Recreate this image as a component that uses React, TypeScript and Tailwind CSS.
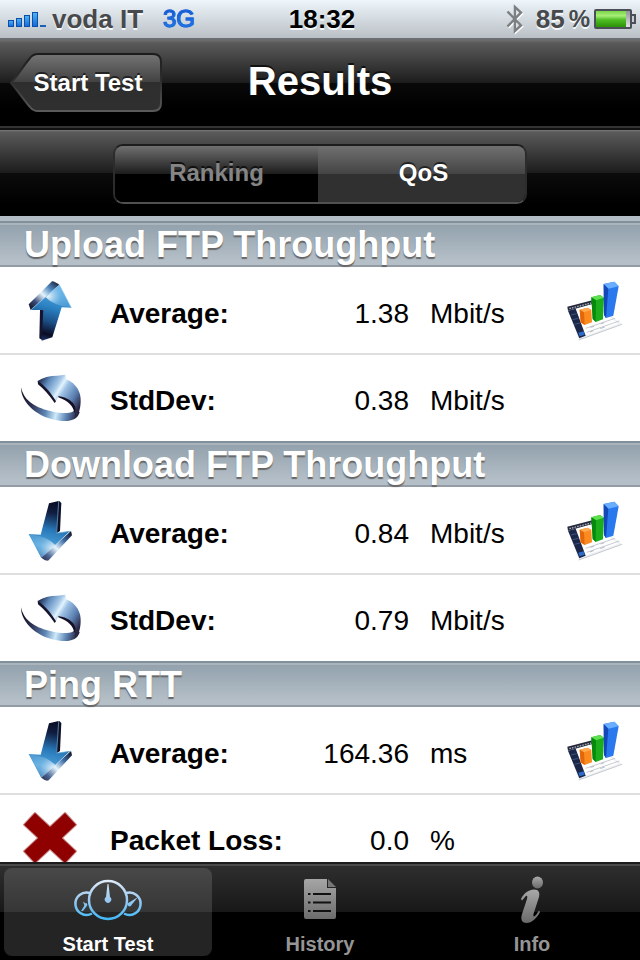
import type { ReactNode } from "react";

function SignalIcon() {
  return (
    <svg width="38" height="17" viewBox="0 0 38 17" aria-hidden="true">
      <defs>
        <linearGradient id="signal" x1="0" y1="0" x2="0" y2="1">
          <stop offset="0" stopColor="#52b4f4" />
          <stop offset="1" stopColor="#1268d8" />
        </linearGradient>
      </defs>
      <g fill="url(#signal)" stroke="#0b4fa8" strokeWidth="1">
        <rect x="0.5" y="9.5" width="5" height="6" />
        <rect x="8.5" y="7.5" width="5" height="8" />
        <rect x="16.5" y="4.5" width="5" height="11" />
        <rect x="24.5" y="1.5" width="5" height="14" />
      </g>
      <rect x="32" y="14" width="6" height="2" fill="#1a5fb5" />
    </svg>
  );
}

function BluetoothIcon() {
  return (
    <svg width="18" height="32" viewBox="0 0 18 32" fill="none" aria-hidden="true">
      <path d="M1.500 8.500 15 22.500 9 28V4l6 5.500L1.500 23.500" stroke="#fff" strokeWidth="2.500" transform="translate(1 1)" />
      <path d="M1.500 8.500 15 22.500 9 28V4l6 5.500L1.500 23.500" stroke="#7d8083" strokeWidth="2.500" />
    </svg>
  );
}

function BatteryIcon() {
  return (
    <svg width="42" height="21" viewBox="0 0 42 21" aria-hidden="true">
      <defs>
        <linearGradient id="charge" x1="0" y1="0" x2="0" y2="1">
          <stop offset="0" stopColor="#7ad548" />
          <stop offset="0.3" stopColor="#a8ee78" />
          <stop offset="0.55" stopColor="#4fbd24" />
          <stop offset="1" stopColor="#2c9208" />
        </linearGradient>
        <linearGradient id="cell" x1="0" y1="0" x2="0" y2="1">
          <stop offset="0" stopColor="#8d9094" />
          <stop offset="1" stopColor="#e4e6e8" />
        </linearGradient>
      </defs>
      <rect x="1" y="1" width="36" height="18" rx="1" fill="url(#cell)" stroke="#4b4f57" strokeWidth="2" />
      <rect x="2" y="2" width="30" height="16" fill="url(#charge)" />
      <path d="M38 6h3v8h-3" fill="#c9cdd1" stroke="#4b4f57" strokeWidth="2" />
    </svg>
  );
}

function UpArrowIcon() {
  return (
    <svg className="block" width="60" height="62" viewBox="60 45 180 186" aria-hidden="true">
      <defs>
        <linearGradient id="upFront" x1="0.55" y1="0" x2="0.35" y2="1">
          <stop offset="0" stopColor="#5fb0e6" />
          <stop offset="0.4" stopColor="#2b82c3" />
          <stop offset="0.65" stopColor="#1c4f86" />
          <stop offset="0.88" stopColor="#0a0c22" />
          <stop offset="1" stopColor="#1b3568" />
        </linearGradient>
        <linearGradient id="upSide" x1="0" y1="1" x2="1" y2="0">
          <stop offset="0" stopColor="#0b0a18" />
          <stop offset="0.25" stopColor="#3a4a78" />
          <stop offset="0.5" stopColor="#e6f4fd" />
          <stop offset="0.72" stopColor="#4f86be" />
          <stop offset="1" stopColor="#100c1e" />
        </linearGradient>
        <radialGradient id="upShine" cx="0.1" cy="0.5" r="0.9">
          <stop offset="0" stopColor="#fff" stopOpacity="0.9" />
          <stop offset="0.6" stopColor="#8ccaf2" stopOpacity="0.4" />
          <stop offset="1" stopColor="#8ccaf2" stopOpacity="0.2" />
        </radialGradient>
      </defs>
      <path d="M120 134 132 136 128 226 118 220Z" fill="#141430" />
      <path d="M178 59 214 128 185 127 157 217 125 227 130 135 92 135Z" fill="url(#upFront)" />
      <path d="M86 118 156 49Q160 46 178 59L92 135Z" fill="url(#upSide)" />
      <path d="M178 60 212 127Q160 122 136 96Z" fill="url(#upShine)" />
      <path d="M92 135 178 60 214 128" fill="none" stroke="#8cc8ee" strokeWidth="2" />
    </svg>
  );
}

function DownArrowIcon() {
  return (
    <svg className="block" width="60" height="62" viewBox="60 45 180 186" aria-hidden="true">
      <defs>
        <linearGradient id="downFront" x1="0.55" y1="0" x2="0.4" y2="1">
          <stop offset="0" stopColor="#0a0c22" />
          <stop offset="0.2" stopColor="#101d40" />
          <stop offset="0.5" stopColor="#2878b8" />
          <stop offset="0.8" stopColor="#4fa3dc" />
          <stop offset="1" stopColor="#2b6da8" />
        </linearGradient>
        <linearGradient id="downSide" x1="0" y1="1" x2="1" y2="0">
          <stop offset="0" stopColor="#2b2440" />
          <stop offset="0.2" stopColor="#4c6897" />
          <stop offset="0.45" stopColor="#e6f4fd" />
          <stop offset="0.7" stopColor="#3f6ea8" />
          <stop offset="1" stopColor="#0b0a18" />
        </linearGradient>
        <radialGradient id="downShine" cx="0.95" cy="0.6" r="0.9">
          <stop offset="0" stopColor="#fff" stopOpacity="0.9" />
          <stop offset="0.6" stopColor="#9fd0f0" stopOpacity="0.4" />
          <stop offset="1" stopColor="#9fd0f0" stopOpacity="0.2" />
        </radialGradient>
      </defs>
      <path d="M170 53 178 48 184 54 180 138 168 146Z" fill="#0f0f26" />
      <path d="M147 55 176 48 169 145 210 138 124 219 86 147 122 149Z" fill="url(#downFront)" />
      <path d="M213 138 216 151 146 226Q138 230 124 218Z" fill="url(#downSide)" />
      <path d="M88 148Q142 154 166 180L124 218Z" fill="url(#downShine)" />
      <path d="M176 49 170 144 213 139" fill="none" stroke="#6fb3e2" strokeWidth="2" />
    </svg>
  );
}

function DeviationIcon() {
  return (
    <svg className="block" width="62" height="50" viewBox="13 12 186 150" aria-hidden="true">
      <defs>
        <linearGradient id="swoosh" gradientUnits="userSpaceOnUse" x1="16" y1="90" x2="190" y2="130">
          <stop offset="0" stopColor="#141022" />
          <stop offset="0.2" stopColor="#2e3154" />
          <stop offset="0.45" stopColor="#5c86b4" />
          <stop offset="0.63" stopColor="#cdeafa" />
          <stop offset="0.8" stopColor="#6088b8" />
          <stop offset="1" stopColor="#241c38" />
        </linearGradient>
        <linearGradient id="swooshHead" gradientUnits="userSpaceOnUse" x1="66" y1="40" x2="190" y2="115">
          <stop offset="0" stopColor="#1f2a4c" />
          <stop offset="0.18" stopColor="#5f8abb" />
          <stop offset="0.38" stopColor="#a9cbe9" />
          <stop offset="0.46" stopColor="#e2f3fd" />
          <stop offset="0.56" stopColor="#9cc0e4" />
          <stop offset="0.8" stopColor="#587dae" />
          <stop offset="1" stopColor="#292744" />
        </linearGradient>
      </defs>
      <path d="M16 55C15 100 66 150 138 156C168 158 186 150 192 130L178 116C178 132 156 134 130 131C86 125 26 108 16 55Z" fill="url(#swoosh)" />
      <path d="M66 36Q90 20 125 20L149 17 151 30C184 44 197 72 195 98C194 120 190 138 176 146C186 118 164 92 128 82L120 98Z" fill="url(#swooshHead)" />
      <path d="M128 81C164 86 190 112 176 132C174 112 158 96 128 85Z" fill="#151025" />
      <path d="M66 35C88 50 108 74 121 97L117 102C102 80 84 60 67 46Z" fill="#17142b" />
    </svg>
  );
}

function CrossIcon() {
  return (
    <svg className="block" width="60" height="60" viewBox="-30 -30 60 60" aria-hidden="true">
      <g fill="#c98a8a">
        <rect x="-29" y="-9" width="58" height="18" rx="1" transform="rotate(43)" />
        <rect x="-29" y="-9" width="58" height="18" rx="1" transform="rotate(-43)" />
      </g>
      <g fill="#8f0000">
        <rect x="-28" y="-8" width="56" height="16" transform="rotate(43)" />
        <rect x="-28" y="-8" width="56" height="16" transform="rotate(-43)" />
      </g>
    </svg>
  );
}

function ChartIcon() {
  return (
    <svg className="block" width="60" height="62" viewBox="72 45 180 186" aria-hidden="true">
      <path d="M82 126 157 106 247 178 117 225Z" fill="#f0f2f5" />
      <path d="M88 136 155 118 235 176 130 214Z" fill="#fff" />
      <path d="M82 125 157 106 160 116 84 137Z" fill="#23283c" />
      <path d="M88 131 154 114" stroke="#a5a9b5" strokeWidth="4" strokeDasharray="5 3" />
      <path d="M84 137 107 131 137 212 118 220Z" fill="#1b2748" />
      <path d="M93 150 110 146M98 164 115 160M103 178 120 174" stroke="#506a9c" strokeWidth="2" />
      <path d="M115 203 131 199 134 209 119 214Z" fill="#2e6ccc" />
      <path d="M137 190 225 160M140 202 238 168M116 225 246 178" stroke="#aab0b8" strokeWidth="2" />
      <path d="M150 201 161 197M181 191 194 186M151 187 162 184M182 177 193 173" stroke="#b8bcc4" strokeWidth="3" />
      <path d="M119 134 142 128 154 134 156 172 134 180 122 172Z" fill="#fb8a20" />
      <path d="M119 134 142 128 154 134 132 142Z" fill="#ffab52" />
      <path d="M119 134 132 142 134 180 122 172Z" fill="#e56608" />
      <path d="M154 97 180 90 192 98 189 163 167 171 158 162Z" fill="#1cad1c" />
      <path d="M154 97 180 90 192 98 168 106Z" fill="#5ee04c" />
      <path d="M154 97 168 106 167 171 158 162Z" fill="#078a0c" />
      <path d="M191 57 223 50 236 64 220 152 198 159 192 150Z" fill="#2a78ee" />
      <path d="M191 57 223 50 236 64 205 71Z" fill="#69adff" />
      <path d="M191 57 205 71 198 159 192 150Z" fill="#1248b8" />
    </svg>
  );
}

function GaugesIcon() {
  return (
    <svg width="72" height="46" viewBox="0 0 72 46" fill="none" aria-hidden="true">
      <defs>
        <linearGradient id="gauge" gradientUnits="userSpaceOnUse" x1="0" y1="2" x2="0" y2="43">
          <stop offset="0" stopColor="#e3ecf8" />
          <stop offset="0.5" stopColor="#9cc9f2" />
          <stop offset="1" stopColor="#3fb9f8" />
        </linearGradient>
      </defs>
      <g stroke="url(#gauge)" strokeWidth="2.5">
        <path d="M18 16A11.200 11.200 0 1 0 20 36.500" />
        <path d="M54 16A11.200 11.200 0 1 1 52 36.500" />
        <circle cx="36" cy="23" r="19" />
      </g>
      <g fill="url(#gauge)">
        <path d="M35.500 7h1l1.500 13a3.200 3.200 0 1 1-4 0Z" />
        <path d="M14 26 9 34l2 0 3.500-4.500a2 2 0 0 0-.5-3.500Z" />
        <path d="M11 24.500 15 27.500 13 30Z" />
        <path d="M66 20 57 25.500a2 2 0 1 0 2.500 2.500Z" />
      </g>
    </svg>
  );
}

function HistoryIcon() {
  return (
    <svg width="34" height="46" viewBox="0 0 34 46" aria-hidden="true">
      <defs>
        <linearGradient id="paper" x1="0" y1="0" x2="0" y2="1">
          <stop offset="0" stopColor="#a6a6a6" />
          <stop offset="1" stopColor="#6c6c6c" />
        </linearGradient>
      </defs>
      <path d="M3 2H24V11H33V40Q33 42 31 42H3Q1 42 1 40V4Q1 2 3 2Z" fill="url(#paper)" />
      <path d="M25 2 33 10H25Z" fill="#777" />
      <path d="M10 17H28M10 25.500H28M10 34H28" stroke="#111" strokeWidth="2" />
      <path d="M5 17H7.500M5 25.500H7.500M5 34H7.500" stroke="#111" strokeWidth="2" />
    </svg>
  );
}

function InfoIcon() {
  return (
    <svg width="24" height="50" viewBox="0 0 24 50" aria-hidden="true">
      <defs>
        <linearGradient id="info" x1="0" y1="0" x2="0" y2="1">
          <stop offset="0" stopColor="#a8a8a8" />
          <stop offset="1" stopColor="#6a6a6a" />
        </linearGradient>
      </defs>
      <g fill="url(#info)">
        <ellipse cx="17.500" cy="7.500" rx="5.500" ry="6" />
        <path d="M1 24C4 18 9 14.500 14 14.500C19 14.500 20 18 19 22L13.500 39C13 42 14 42 16 40L19 35.500 20 37C17 43 12 48 6.500 48C1.500 48 .5 44 2 39L7 24C8 20.500 6.500 20 5 22L2 25.500Z" />
      </g>
    </svg>
  );
}

type Metric = { icon: ReactNode; label: string; value: string; unit: string; chart?: boolean };
type Group = { title: string; metrics: Metric[] };

const groups: Group[] = [
  {
    title: "Upload FTP Throughput",
    metrics: [
      { icon: <UpArrowIcon />, label: "Average:", value: "1.38", unit: "Mbit/s", chart: true },
      { icon: <DeviationIcon />, label: "StdDev:", value: "0.38", unit: "Mbit/s" },
    ],
  },
  {
    title: "Download FTP Throughput",
    metrics: [
      { icon: <DownArrowIcon />, label: "Average:", value: "0.84", unit: "Mbit/s", chart: true },
      { icon: <DeviationIcon />, label: "StdDev:", value: "0.79", unit: "Mbit/s" },
    ],
  },
  {
    title: "Ping RTT",
    metrics: [
      { icon: <DownArrowIcon />, label: "Average:", value: "164.36", unit: "ms", chart: true },
      { icon: <CrossIcon />, label: "Packet Loss:", value: "0.0", unit: "%" },
    ],
  },
];

function StatusBar() {
  return (
    <header className="grid h-10 shrink-0 grid-cols-[1fr_auto_1fr] items-center border-b-2 border-[#6b6e70] bg-linear-to-b from-[#eef6fb] to-[#bac0c5] pl-2 pr-1 text-[26px] font-bold leading-8 text-[#47494c] [text-shadow:0_2px_0_#f4f8fa]">
      <div className="flex items-center">
        <SignalIcon />
        <span className="ml-[6px]">voda IT</span>
        <span className="ml-5 bg-linear-to-b from-[#1433c4] to-[#2f9af5] bg-clip-text text-2xl font-normal text-transparent [-webkit-text-stroke:1px_#1f68dc] [text-shadow:none]">
          3G
        </span>
      </div>
      <time className="text-black">18:32</time>
      <div className="flex items-center justify-end">
        <BluetoothIcon />
        <span className="ml-3">85</span>
        <span className="ml-1 text-2xl">%</span>
        <span className="ml-1">
          <BatteryIcon />
        </span>
      </div>
    </header>
  );
}

function NavBar() {
  return (
    <div className="grid h-[88px] shrink-0 grid-cols-[1fr_auto_1fr] items-center border-b-2 border-[#333] bg-[linear-gradient(#6e6e6e_0,#5a5a5a_3px,#1c1c1c_50%,#090909_50%,#000_80%)] px-[10px]">
      <button type="button" className="relative h-[60px] w-[152px] pl-1 text-2xl font-bold text-white [text-shadow:0_-2px_0_#222]">
        <svg className="absolute inset-0" width="152" height="60" viewBox="0 0 152 60" aria-hidden="true">
          <defs>
            <linearGradient id="back" x1="0" y1="0" x2="0" y2="1">
              <stop offset="0" stopColor="#747474" />
              <stop offset="0.5" stopColor="#414141" />
              <stop offset="0.5" stopColor="#2e2e2e" />
              <stop offset="1" stopColor="#303030" />
            </linearGradient>
            <linearGradient id="backEdge" x1="0" y1="0" x2="0" y2="1">
              <stop offset="0" stopColor="#1c1c1c" />
              <stop offset="0.5" stopColor="#303030" />
              <stop offset="1" stopColor="#5a5a5a" />
            </linearGradient>
          </defs>
          <path d="M1 30C8 22 14 12 20 5Q23 1 28 1H143Q151 1 151 9V50Q151 58 143 58H28Q23 58 20 54C14 47 8 38 1 30Z" fill="url(#back)" stroke="url(#backEdge)" strokeWidth="2" />
        </svg>
        <span className="relative">Start Test</span>
      </button>
      <h1 className="pb-1 text-[40px] font-bold leading-[48px] text-white [text-shadow:0_-2px_0_#111]">Results</h1>
    </div>
  );
}

function ViewSwitch() {
  return (
    <div className="flex h-[88px] shrink-0 justify-center border-t-2 border-[#111] bg-[linear-gradient(#7a7a7a_0,#5a5a5a_2px,#1c1c1c_50%,#0c0c0c_50%,#000_85%)] px-4 pt-[14px]">
      <div className="flex h-[60px] w-[414px] overflow-hidden rounded-[10px] border-2 border-x-[#2c2c2c] border-b-[#505050] border-t-[#1d1d1d] pb-0 text-2xl font-bold">
        <button type="button" aria-pressed="false" className="flex-1 bg-[linear-gradient(#707070_0,#1c1c1c_50%,#000_50%)] pb-[2px] text-[#858585] [text-shadow:0_-2px_0_#111]">
          Ranking
        </button>
        <button type="button" aria-pressed="true" className="flex-1 bg-[linear-gradient(#707070_0,#444_50%,#303030_50%)] pb-[2px] pl-1 text-white [text-shadow:0_-2px_0_#222]">
          QoS
        </button>
      </div>
    </div>
  );
}

function MetricGroup({ title, metrics }: Group) {
  return (
    <section>
      <h2 className="h-[46px] border-b-2 border-t-2 border-b-[#939ca4] border-t-[#82909b] bg-[linear-gradient(#a9b4bd_0,#a9b4bd_2px,#93a2ad_2px,#b5bfc8_90%)] pl-6 text-4xl font-bold leading-[44px] text-white [text-shadow:0_2px_1px_#666]">
        {title}
      </h2>
      <table className="w-full table-fixed border-collapse text-[28px] leading-8 text-black">
        <colgroup>
          <col className="w-[110px]" />
          <col className="w-[190px]" />
          <col className="w-[109px]" />
          <col />
          <col className="w-[76px]" />
        </colgroup>
        <tbody>
          {metrics.map((m, i) => (
            <tr key={m.label} className={i === 0 ? "h-[88px] shadow-[inset_0_-2px_0_#dfdfdf]" : "h-[86px]"}>
              <td className="pl-5">{m.icon}</td>
              <th scope="row" className="whitespace-nowrap pt-[6px] text-left font-bold">{m.label}</th>
              <td className="pt-[6px] text-right">{m.value}</td>
              <td className="pl-[21px] pt-[6px]">{m.unit}</td>
              <td>
                {m.chart && (
                  <button type="button" aria-label={"Show chart for " + title} className="block">
                    <ChartIcon />
                  </button>
                )}
              </td>
            </tr>
          ))}
        </tbody>
      </table>
    </section>
  );
}

function Tab({ icon, label, active }: { icon: ReactNode; label: string; active?: boolean }) {
  return (
    <button
      type="button"
      aria-current={active ? "page" : undefined}
      className={
        active
          ? "flex h-[88px] flex-col items-center rounded-lg bg-[linear-gradient(#484848_0,#363636_50%,#242424_50%)] text-white"
          : "flex h-[88px] flex-col items-center text-[#959595]"
      }
    >
      <span className="flex h-[65px] items-center">{icon}</span>
      <span className="text-xl font-bold leading-6">{label}</span>
    </button>
  );
}

export default function App() {
  return (
    <div className="flex h-screen flex-col overflow-hidden bg-white font-['Liberation_Sans',Arial,sans-serif]">
      <StatusBar />
      <NavBar />
      <ViewSwitch />
      <main className="min-h-0 flex-1 overflow-hidden bg-white">
        <div className="h-[5px] bg-[#b3bdc6]" />
        {groups.map((g) => (
          <MetricGroup key={g.title} title={g.title} metrics={g.metrics} />
        ))}
      </main>
      <nav className="grid h-[98px] shrink-0 grid-cols-3 gap-1 border-t-2 border-[#1c1c1c] bg-[linear-gradient(#4a4a4a_0,#4a4a4a_2px,#2e2e2e_2px,#181818_50%,#000_50%)] px-1 pt-1">
        <Tab icon={<GaugesIcon />} label="Start Test" active />
        <Tab icon={<HistoryIcon />} label="History" />
        <Tab icon={<InfoIcon />} label="Info" />
      </nav>
    </div>
  );
}
